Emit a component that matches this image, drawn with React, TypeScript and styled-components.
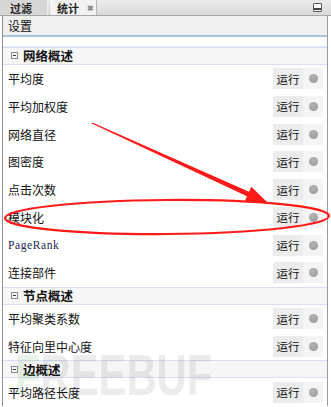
import React from "react";
import styled, { createGlobalStyle } from "styled-components";

const Global = createGlobalStyle`
  html, body { margin: 0; padding: 0; background: #ffffff; }
  * { box-sizing: border-box; }
`;

const CJK = `"Noto Sans CJK SC", "Noto Sans", sans-serif`;

const Frame = styled.div`
  position: relative;
  width: 331px;
  height: 407px;
  overflow: hidden;
  background: #ffffff;
  font-family: ${CJK};
  color: #111;
`;

const TabBar = styled.div`
  display: flex;
  align-items: stretch;
  height: 16px;
  background: linear-gradient(#ececec, #d9d9d9);
  border-bottom: 1px solid #a6a6a6;
`;

const Tab = styled.div<{ $active?: boolean }>`
  display: flex;
  align-items: center;
  gap: 8px;
  width: ${(p) => (p.$active ? "46px" : "48px")};
  margin-left: ${(p) => (p.$active ? "3px" : "0")};
  padding-left: ${(p) => (p.$active ? "5px" : "10px")};
  background: ${(p) => (p.$active ? "#f2f2f2" : "#d6d6d6")};
  border-right: 1px solid ${(p) => (p.$active ? "#b8b8b8" : "#eeeeee")};
  border-left: ${(p) => (p.$active ? "1px solid #ffffff" : "none")};
  font-size: 11px;
  font-weight: 700;
  line-height: 16px;
  color: #222;
`;

const Close = styled.span`
  font-size: 8px;
  color: #888;
  line-height: 1;
`;

const TabSpacer = styled.div`
  flex: 1;
`;

const Minimize = styled.div`
  align-self: center;
  width: 9px;
  height: 9px;
  margin-right: 9px;
  border: 1px solid #555;
  background: linear-gradient(#ffffff 55%, #444 55%, #444 85%, #ffffff 85%);
  border-radius: 1px;
`;

const Panel = styled.div`
  margin-left: 2px;
  width: 326px;
  height: 390px;
  border-left: 1px solid #8f8f8f;
  border-right: 1px solid #9a9a9a;
  background: #ffffff;
  display: flex;
  flex-direction: column;
`;

const SettingsBar = styled.div`
  height: 22px;
  padding-left: 5px;
  display: flex;
  align-items: center;
  background: #f0f0f0;
  border-bottom: 2px solid #a9bfdc;
  font-size: 12px;
`;

const Gap = styled.div`
  height: 10px;
  border-bottom: 1px solid #e2e8f8;
`;

const Header = styled.div`
  height: 17px;
  display: flex;
  align-items: center;
  gap: 5px;
  padding-left: 8px;
  background: #f6f6f6;
  border-bottom: 1px solid #d6e0f2;
  font-size: 12.5px;
  font-weight: 700;
  color: #111;
`;

const HeaderTop = styled.div`
  border-top: 1px solid #d6e0f2;
`;

const Toggle = styled.span`
  position: relative;
  width: 7px;
  height: 7px;
  border: 1px solid #8a8a8a;
  background: #fff;
  flex: none;
  &::after {
    content: "";
    position: absolute;
    left: 1px;
    top: 2px;
    width: 3px;
    height: 1px;
    background: #333;
  }
`;

const Row = styled.div`
  height: 27.75px;
  display: flex;
  align-items: center;
  padding-left: 5px;
  padding-right: 4px;
  font-size: 12px;
`;

const Label = styled.span<{ $latin?: boolean }>`
  flex: 1;
  font-family: ${(p) => (p.$latin ? `"Liberation Serif", serif` : CJK)};
  color: ${(p) => (p.$latin ? "#1c1c50" : "#111")};
  letter-spacing: ${(p) => (p.$latin ? "0.6px" : "0")};
  font-size: ${(p) => (p.$latin ? "11.5px" : "12px")};
`;

const RunButton = styled.div`
  width: 30px;
  height: 21px;
  display: flex;
  align-items: center;
  justify-content: center;
  background: #ececec;
  font-size: 11.5px;
  color: #111;
`;

const StatusCell = styled.div`
  width: 20px;
  height: 21px;
  display: flex;
  align-items: center;
  justify-content: center;
  background: #f4f4f4;
`;

const Dot = styled.span`
  width: 9px;
  height: 9px;
  border-radius: 50%;
  background: radial-gradient(circle at 40% 35%, #b4b4b4, #979797);
`;

const Overlay = styled.svg`
  position: absolute;
  left: 0;
  top: 0;
  pointer-events: none;
`;

const Watermark = styled.div`
  position: absolute;
  left: 15px;
  top: 346px;
  font-family: "Liberation Sans", Arial, sans-serif;
  font-weight: 700;
  font-size: 58px;
  line-height: 1;
  color: rgba(0, 0, 0, 0.075);
  transform: scaleX(0.72);
  transform-origin: left top;
  white-space: nowrap;
  pointer-events: none;
`;

const WaterF = styled.span`
  color: rgba(120, 190, 120, 0.18);
`;

type Stat = { label: string; latin?: boolean };

const sections: { title: string; rows: Stat[] }[] = [
  {
    title: "网络概述",
    rows: [
      { label: "平均度" },
      { label: "平均加权度" },
      { label: "网络直径" },
      { label: "图密度" },
      { label: "点击次数" },
      { label: "模块化" },
      { label: "PageRank", latin: true },
      { label: "连接部件" },
    ],
  },
  {
    title: "节点概述",
    rows: [{ label: "平均聚类系数" }, { label: "特征向里中心度" }],
  },
  {
    title: "边概述",
    rows: [{ label: "平均路径长度" }],
  },
];

export default function App() {
  return (
    <Frame>
      <Global />
      <TabBar>
        <Tab>过滤</Tab>
        <Tab $active>
          统计 <Close>✖</Close>
        </Tab>
        <TabSpacer />
        <Minimize />
      </TabBar>
      <Panel>
        <SettingsBar>设置</SettingsBar>
        <Gap />
        {sections.map((s) => (
          <HeaderTop key={s.title}>
            <Header>
              <Toggle />
              {s.title}
            </Header>
            {s.rows.map((r) => (
              <Row key={r.label}>
                <Label $latin={r.latin}>{r.label}</Label>
                <RunButton>运行</RunButton>
                <StatusCell>
                  <Dot />
                </StatusCell>
              </Row>
            ))}
          </HeaderTop>
        ))}
      </Panel>
      <Watermark>
        <WaterF>F</WaterF>REEBUF
      </Watermark>
      <Overlay width="331" height="407" viewBox="0 0 331 407">
        <ellipse
          cx="167"
          cy="217"
          rx="162"
          ry="17"
          fill="none"
          stroke="#ff1a1a"
          strokeWidth="2.2"
          transform="rotate(-0.4 167 217)"
        />
        <polygon
          points="92.3,122.4 249,191.7 251.3,186.7 268,203 244.7,201.3 247,196.3 91.7,123.6"
          fill="#ff1a1a"
        />
      </Overlay>
    </Frame>
  );
}
